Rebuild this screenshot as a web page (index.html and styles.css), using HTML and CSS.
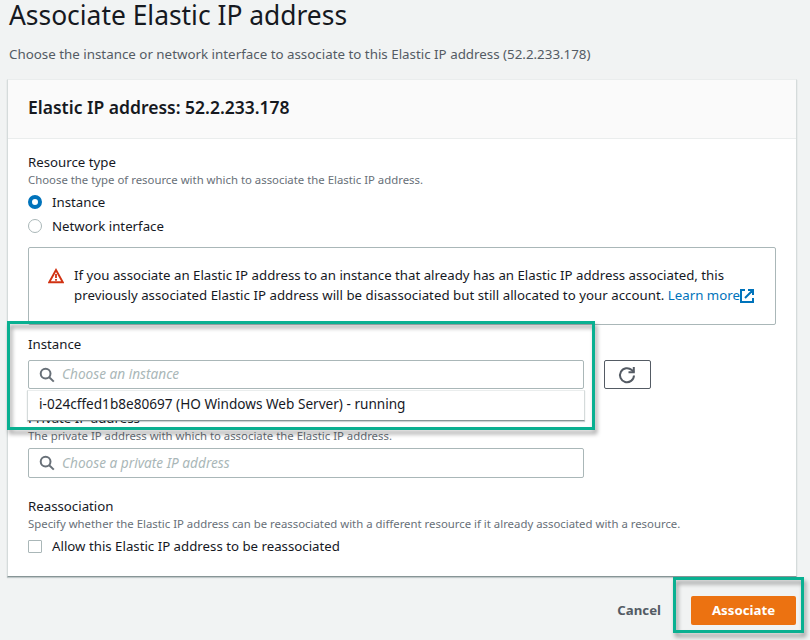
FILE: index.html
```html
<!DOCTYPE html>
<html lang="en">
<head>
<meta charset="utf-8">
<title>Associate Elastic IP address</title>
<link rel="stylesheet" href="styles.css">
</head>
<body>
<main class="page">
  <h1 class="title">Associate Elastic IP address</h1>
  <p class="subtitle">Choose the instance or network interface to associate to this Elastic IP address (52.2.233.178)</p>
  <section class="card">
    <header class="card-header"><h2>Elastic IP address: 52.2.233.178</h2></header>
    <div class="card-body">
      <div class="label">Resource type</div>
      <div class="hint">Choose the type of resource with which to associate the Elastic IP address.</div>
      <div class="choice"><span class="radio checked"></span><span>Instance</span></div>
      <div class="choice"><span class="radio"></span><span>Network interface</span></div>
      <div class="alert">
        <svg class="warn" viewBox="0 0 16 16"><path d="M8 2 1.2 14.2h13.6z" fill="none" stroke="#d13212" stroke-width="1.9"/><path d="M8 6v4M8 11v1.7" stroke="#d13212" stroke-width="1.8"/></svg>
        <p>If you associate an Elastic IP address to an instance that already has an Elastic IP address associated, this<br><span class="line-b">previously associated Elastic IP address will be disassociated but still allocated to your account. <a>Learn more</a></span><svg class="external" viewBox="0 0 14 14"><path d="M5 1H1v12h12V9M8 1h5v5M12.5 1.5 5 9" fill="none" stroke="#0073bb" stroke-width="2"/></svg></p>
      </div>
      <div class="instance-group">
        <div class="label">Instance</div>
        <div class="picker">
          <div class="search"><svg class="lens" viewBox="0 0 16 16"><circle cx="6.6" cy="6.6" r="4.9"/><path d="m10.2 10.2 4.6 4.4"/></svg><span>Choose an instance</span></div>
          <div class="refresh"><svg viewBox="0 0 18 18"><path d="M16 9.5a7 7 0 1 1-2.2-5.4L16 6" fill="none" stroke="#545b64" stroke-width="2"/><path d="M15.8 1v5.2h-5.3" fill="none" stroke="#545b64" stroke-width="2"/></svg></div>
          <div class="dropdown">i-024cffed1b8e80697 (HO Windows Web Server) - running</div>
        </div>
        <div class="highlight"></div>
      </div>
      <div class="label private-label">Private IP address</div>
      <div class="hint">The private IP address with which to associate the Elastic IP address.</div>
      <div class="search private-search"><svg class="lens" viewBox="0 0 16 16"><circle cx="6.6" cy="6.6" r="4.9"/><path d="m10.2 10.2 4.6 4.4"/></svg><span>Choose a private IP address</span></div>
      <div class="label reassoc">Reassociation</div>
      <div class="hint">Specify whether the Elastic IP address can be reassociated with a different resource if it already associated with a resource.</div>
      <div class="choice"><span class="checkbox"></span><span>Allow this Elastic IP address to be reassociated</span></div>
    </div>
  </section>
  <footer class="actions">
    <span class="cancel">Cancel</span>
    <div class="submit-wrap"><div class="submit">Associate</div><div class="submit-highlight"></div></div>
  </footer>
</main>
</body>
</html>
```
FILE: styles.css
```css
* { box-sizing: border-box; }
body { margin: 0; background: #f1f3f3; color: #16191f; font: 13.25px/20px "Noto Sans", sans-serif; white-space: nowrap; overflow: hidden; }
h1, h2, p { margin: 0; }
svg { display: block; flex: none; }
.page { width: 810px; height: 640px; padding: 0 13px 0 7px; overflow: hidden; }
.title { height: 36px; padding-left: 2px; font-size: 26.4px; line-height: 30px; font-weight: 400; }
.subtitle { height: 43px; padding: 8px 0 0 2px; color: #545b64; font-size: 13.35px; }
.card { height: 498px; background: #fff; border: 1px solid #d5dbdb; border-top-color: #eaeded; border-bottom-color: #879596; box-shadow: 0 1px 1px rgba(0,28,36,.2); }
.card-header { height: 59px; padding: 15px 20px; background: #fafafa; border-bottom: 1px solid #eaeded; }
h2 { font-size: 17.5px; line-height: 24px; font-weight: 600; }
.card-body { padding: 13px 20px 0; }
.label { height: 20px; }
.hint { height: 16px; font-size: 11.37px; line-height: 16px; color: #687078; }
.choice { display: flex; align-items: center; gap: 10px; height: 22px; margin-top: 3px; }
.choice + .choice { margin-top: 2px; }
.radio { width: 14px; height: 14px; border: 1px solid #aab7b8; border-radius: 50%; }
.radio.checked { border: 4px solid #0073bb; }
.checkbox { width: 14px; height: 13px; border: 1px solid #aab7b8; border-radius: 1px; }
.alert { display: flex; height: 78px; margin-top: 10px; padding: 17px 20px; border: 1px solid #aab7b8; border-radius: 2px; }
.warn { width: 16px; height: 16px; margin: 3px 10px 0 -1px; }
.line-b { letter-spacing: .025px; }
.external { display: inline-block; width: 14px; height: 14px; vertical-align: -3px; }
.alert a { color: #0073bb; }
.instance-group { position: relative; margin-top: 9px; }
.picker { display: flex; gap: 20px; position: relative; margin-top: 6px; }
.search { display: flex; align-items: center; width: 556px; height: 29px; padding-left: 10px; border: 1px solid #aab7b8; border-radius: 2px; background: #fff; color: #aab7b8; font-size: 13.65px; font-style: italic; }
.search span { height: 21px; }
.lens { width: 16px; height: 16px; margin-right: 7px; fill: none; stroke: #687078; stroke-width: 2; }
.refresh { display: flex; align-items: center; justify-content: center; width: 47px; height: 29px; padding-right: 1px; border: 1px solid #545b64; border-radius: 2px; }
.refresh svg { width: 18px; height: 18px; }
.dropdown { position: absolute; z-index: 1; left: -1px; top: 30px; width: 558px; height: 31px; padding: 3px 0 0 11px; background: #fff; border: 1px solid #d5dbdb; border-top-color: #eaeded; border-bottom-color: #879596; box-shadow: 0 1px 1px rgba(0,28,36,.2); font-size: 13.6px; }
.highlight, .submit-highlight { position: absolute; z-index: 2; border: 3px solid #09b091; filter: drop-shadow(2px 4px 2px rgba(0,0,0,.38)); }
.highlight { left: -21px; top: -13px; width: 588px; height: 109px; }
.private-label { margin-top: 19px; }
.private-search { height: 30px; margin-top: 4px; }
.reassoc { margin-top: 18px; }
.actions { display: flex; justify-content: flex-end; align-items: center; gap: 30px; height: 29px; margin-top: 19px; padding-right: 1px; font-weight: 700; }
.cancel { height: 22px; color: #545b64; }
.submit-wrap { position: relative; }
.submit { width: 105px; height: 29px; line-height: 28px; text-align: center; color: #fff; background: #ec7211; border-radius: 2px; }
.submit-highlight { left: -18px; top: -19px; width: 131px; height: 56px; }
```
